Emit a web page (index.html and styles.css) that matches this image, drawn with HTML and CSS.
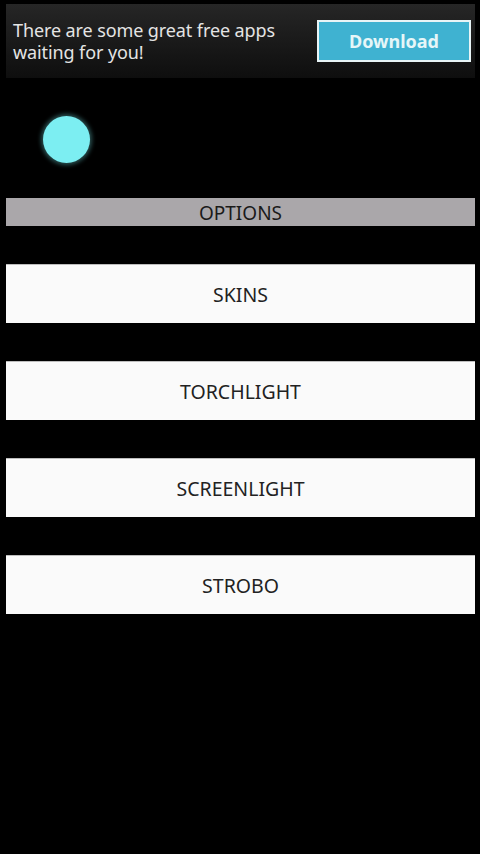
FILE: index.html
```html
<!DOCTYPE html>
<html lang="en">
<head>
  <meta charset="UTF-8" />
  <title>Flashlight</title>
  <link rel="stylesheet" href="styles.css">
</head>
<body>
  <!-- ad banner -->
  <div class="ad">
    <p class="ad-text">There are some great free apps waiting for you!</p>
    <button class="ad-button">Download</button>
  </div>

  <!-- light indicator -->
  <div class="indicator">
    <div class="dot"></div>
  </div>

  <div class="header">OPTIONS</div>

  <div class="menu">
    <button class="item">SKINS</button>
    <button class="item">TORCHLIGHT</button>
    <button class="item">SCREENLIGHT</button>
    <button class="item">STROBO</button>
  </div>
</body>
</html>
```

FILE: styles.css
```css
body {
  margin: 0;
  padding: 4px 5px 0 6px;
  background-color: #000;
  font-family: 'Noto Sans', 'Open Sans', sans-serif;
  width: 480px;
  height: 854px;
  box-sizing: border-box;
}

.ad {
  display: flex;
  align-items: center;
  justify-content: space-between;
  height: 74px;
  padding: 0 4px 0 7px;
  background: linear-gradient(#262626, #0e0e0e);
  box-sizing: border-box;
}

.ad-text {
  margin: 0;
  width: 290px;
  color: #e4e4e4;
  font-size: 18px;
  line-height: 22px;
  letter-spacing: -0.1px;
}

.ad-button {
  width: 154px;
  height: 42px;
  background-color: #3fb2d1;
  border: 2px solid #e8f4f6;
  color: #e6f6f8;
  font-family: 'Noto Sans', sans-serif;
  font-weight: bold;
  font-size: 18px;
  padding: 0;
}

.indicator {
  height: 120px;
  padding: 38px 0 0 37px;
  box-sizing: border-box;
}

.dot {
  width: 47px;
  height: 47px;
  border-radius: 50%;
  background-color: #7ceef2;
  box-shadow: 0 0 4px 2px rgba(124, 238, 242, 0.35);
}

.header {
  height: 28px;
  background-color: #aaa7aa;
  color: #1a1a1a;
  text-align: center;
  font-size: 19px;
  line-height: 30px;
}

.menu {
  display: flex;
  flex-direction: column;
  gap: 38px;
  margin-top: 38px;
}

.item {
  height: 59px;
  background-color: #fafafa;
  border: none;
  border-top: 1px solid #bdbdbd;
  color: #222;
  font-family: 'Noto Sans', sans-serif;
  font-size: 19.5px;
  padding: 0;
}
```
